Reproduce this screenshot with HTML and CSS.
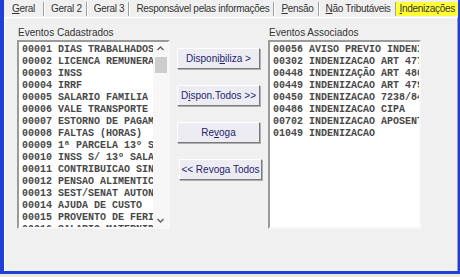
FILE: index.html
```html
<!DOCTYPE html>
<html lang="pt">
<head>
    <meta charset="UTF-8">
    <title>Indenizações</title>
    <link rel="stylesheet" href="styles.css">
</head>
<body>
    <div class="window">
        <!-- Abas -->
        <div class="tabs">
            <span class="tab first"><u>G</u>eral</span>
            <span class="tab">Geral 2</span>
            <span class="tab">Geral 3</span>
            <span class="tab">Responsável pelas informações</span>
            <span class="tab"><u>P</u>ensão</span>
            <span class="tab"><u>N</u>ão Tributáveis</span>
            <span class="tab active"><u>I</u>ndenizações</span>
        </div>

        <div class="panel">
            <div class="column">
                <div class="label">Eventos Cadastrados</div>
                <div class="listbox">
                    <ul class="items">
                        <li>00001 DIAS TRABALHADOS</li>
                        <li>00002 LICENCA REMUNERADA</li>
                        <li>00003 INSS</li>
                        <li>00004 IRRF</li>
                        <li>00005 SALARIO FAMILIA</li>
                        <li>00006 VALE TRANSPORTE</li>
                        <li>00007 ESTORNO DE PAGAMENTO</li>
                        <li>00008 FALTAS (HORAS)</li>
                        <li>00009 1ª PARCELA 13º SALARIO</li>
                        <li>00010 INSS S/ 13º SALARIO</li>
                        <li>00011 CONTRIBUICAO SINDICAL</li>
                        <li>00012 PENSAO ALIMENTICIA</li>
                        <li>00013 SEST/SENAT AUTONOMO</li>
                        <li>00014 AJUDA DE CUSTO</li>
                        <li>00015 PROVENTO DE FERIAS</li>
                        <li>00016 SALARIO MATERNIDADE</li>
                    </ul>
                    <!-- Barra de rolagem -->
                    <div class="scrollbar">
                        <svg class="arrow" width="15" height="13" viewBox="0 0 15 13">
                            <path d="M4.5 8 L7.5 5 L10.5 8" fill="none" stroke="#606060" stroke-width="1.4"/>
                        </svg>
                        <span class="thumb"></span>
                        <span class="track"></span>
                        <svg class="arrow" width="15" height="13" viewBox="0 0 15 13">
                            <path d="M4.5 5 L7.5 8 L10.5 5" fill="none" stroke="#606060" stroke-width="1.4"/>
                        </svg>
                    </div>
                </div>
            </div>

            <div class="buttons">
                <button>Disponi<u>b</u>iliza &gt;</button>
                <button>D<u>i</u>spon.Todos &gt;&gt;</button>
                <button>Re<u>v</u>oga</button>
                <button class="shift">&lt;&lt; Revoga Todos</button>
            </div>

            <div class="column">
                <div class="label">Eventos Associados</div>
                <div class="listbox">
                    <ul class="items">
                        <li>00056 AVISO PREVIO INDENIZADO</li>
                        <li>00302 INDENIZACAO ART 477</li>
                        <li>00448 INDENIZAÇÃO ART 480</li>
                        <li>00449 INDENIZACAO ART 479</li>
                        <li>00450 INDENIZACAO 7238/84</li>
                        <li>00486 INDENIZACAO CIPA</li>
                        <li>00702 INDENIZACAO APOSENTADORIA</li>
                        <li>01049 INDENIZACAO</li>
                    </ul>
                </div>
            </div>
        </div>
    </div>
</body>
</html>
```

FILE: styles.css
```css
/* Janela */
body {
    margin: 0;
    background-color: #ece9d8;
    font-family: "Liberation Sans", Arial, sans-serif;
    font-size: 10px;
    color: #333;
}

.window {
    width: 454px;
    height: 271px;
    display: flex;
    flex-direction: column;
    background-color: #f0f0f0;
    border-left: 4px solid #1f3fd6;
    border-right: 2px solid #1f3fd6;
    border-bottom: 3px solid #1f3fd6;
}

/* Abas */
.tabs {
    display: flex;
    height: 17px;
    padding-left: 4px;
    align-items: center;
    letter-spacing: -0.3px;
}

.tab {
    padding: 0 4px 0 7px;
    line-height: 14px;
    border-right: 1px solid #a0a0a0;
    box-shadow: 1px 0 0 #fff;
    white-space: nowrap;
}

.tab.first {
    padding-left: 4px;
    padding-right: 8px;
}

.tab.active {
    background-color: #ffff33;
    border-right: none;
    box-shadow: none;
    padding: 0 3px 0 4px;
}

/* Painel */
.panel {
    flex: 1;
    display: flex;
    padding: 9px 0 0 12px;
    border-top: 1px solid #fff;
    border-left: 1px solid #fff;
    border-right: 1px solid #a0a0a0;
}

.column {
    display: flex;
    flex-direction: column;
}

.label {
    height: 13px;
    line-height: 12px;
    padding-left: 1px;
}

.listbox {
    width: 149px;
    height: 185px;
    display: flex;
    background-color: #fff;
    border-top: 2px solid #9a9a9a;
    border-left: 2px solid #9a9a9a;
    border-right: 2px solid #f8f8f8;
    border-bottom: 2px solid #f8f8f8;
    overflow: hidden;
}

.items {
    flex: 1;
    margin: 0;
    padding: 2px 0 0 3px;
    list-style: none;
    font-family: "Liberation Mono", "Courier New", monospace;
    font-weight: bold;
    font-size: 10px;
    line-height: 12px;
    color: #484848;
    white-space: nowrap;
    overflow: hidden;
}

/* Barra de rolagem */
.scrollbar {
    width: 15px;
    display: flex;
    flex-direction: column;
    align-items: center;
    background-color: #f7f7f7;
}

.arrow {
    display: block;
}

.thumb {
    width: 12px;
    height: 16px;
    margin-top: 2px;
    background-color: #cdcdcd;
}

.track {
    flex: 1;
}

/* Botões */
.buttons {
    display: flex;
    flex-direction: column;
    gap: 16px;
    padding: 21px 8px 0 7px;
}

.buttons button {
    width: 83px;
    height: 21px;
    padding: 0;
    font-family: "Liberation Sans", Arial, sans-serif;
    font-size: 10px;
    color: #24246e;
    background-color: #ececf2;
    border: 1px solid;
    border-color: #fff #7a7a7a #7a7a7a #fff;
    box-shadow: 1px 1px 0 #b0b0b0;
}

.buttons button.shift {
    margin-left: 2px;
    margin-right: -2px;
}
```
